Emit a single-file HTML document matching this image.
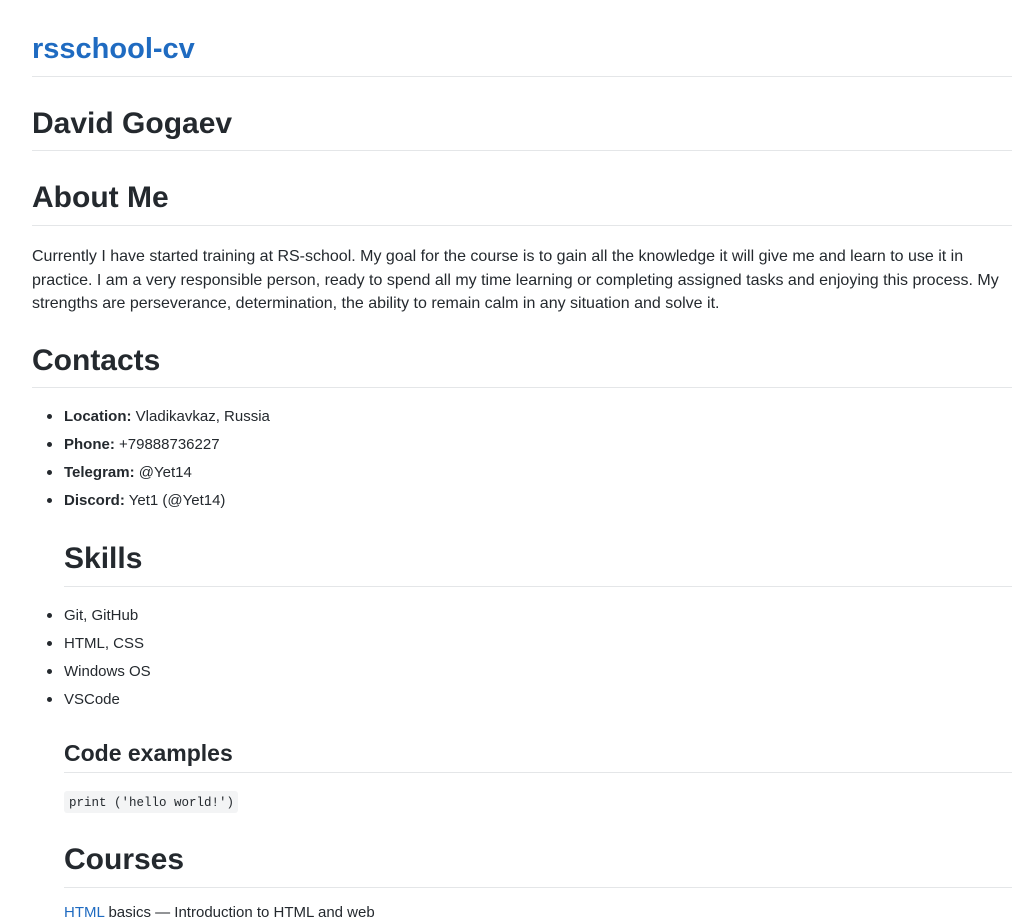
<!DOCTYPE html>
<html><head><meta charset="utf-8"><style>
body{margin:0;background:#fff;width:1024px;height:911px;overflow:hidden;position:relative;font-family:"Liberation Sans",sans-serif;color:#24292e}
.a{position:absolute;white-space:nowrap}
.b{font-weight:bold}
.hr{position:absolute;height:1px;background:#e4e6e8;right:12px}
.li{position:absolute;left:64px;font-size:15px;line-height:20px;white-space:nowrap}
.li:before{content:"";position:absolute;left:-17px;top:7px;width:5px;height:5px;border-radius:50%;background:#24292e}
</style></head><body>
<div class="a b" style="left:32px;top:29px;font-size:29px;line-height:40px;color:#1f6bc1">rsschool-cv</div>
<div class="hr" style="left:32px;top:76px"></div>
<div class="a b" style="left:32px;top:104px;font-size:30px;line-height:40px">David Gogaev</div>
<div class="hr" style="left:32px;top:150px"></div>
<div class="a b" style="left:32px;top:178px;font-size:30px;line-height:40px">About Me</div>
<div class="hr" style="left:32px;top:225px"></div>
<div class="a" style="left:32px;top:245px;font-size:16px;line-height:23.5px">Currently I have started training at RS-school. My goal for the course is to gain all the knowledge it will give me and learn to use it in<br>practice. I am a very responsible person, ready to spend all my time learning or completing assigned tasks and enjoying this process. My<br>strengths are perseverance, determination, the ability to remain calm in any situation and solve it.</div>
<div class="a b" style="left:32px;top:341px;font-size:30px;line-height:40px">Contacts</div>
<div class="hr" style="left:32px;top:387px"></div>
<div class="li" style="top:407px"><b>Location:</b> Vladikavkaz, Russia</div>
<div class="li" style="top:435px"><b>Phone:</b> +79888736227</div>
<div class="li" style="top:463px"><b>Telegram:</b> @Yet14</div>
<div class="li" style="top:491px"><b>Discord:</b> Yet1 (@Yet14)</div>
<div class="a b" style="left:64px;top:539px;font-size:30px;line-height:40px">Skills</div>
<div class="hr" style="left:64px;top:586px"></div>
<div class="li" style="top:606px">Git, GitHub</div>
<div class="li" style="top:634px">HTML, CSS</div>
<div class="li" style="top:662px">Windows OS</div>
<div class="li" style="top:690px">VSCode</div>
<div class="a b" style="left:64px;top:738px;font-size:23px;line-height:30px">Code examples</div>
<div class="hr" style="left:64px;top:772px"></div>
<div class="a" style="left:64px;top:791px;width:174px;height:22px;background:#f3f4f5;border-radius:3px"></div>
<div class="a" style="left:69px;top:792px;font-family:'Liberation Mono',monospace;font-size:12.5px;line-height:22px">print ('hello world!')</div>
<div class="a b" style="left:64px;top:840px;font-size:30px;line-height:40px">Courses</div>
<div class="hr" style="left:64px;top:887px"></div>
<div class="a" style="left:64px;top:903px;font-size:15px;line-height:20px"><span style="color:#1f6bc1">HTML</span> basics — Introduction to HTML and web</div>
</body></html>
